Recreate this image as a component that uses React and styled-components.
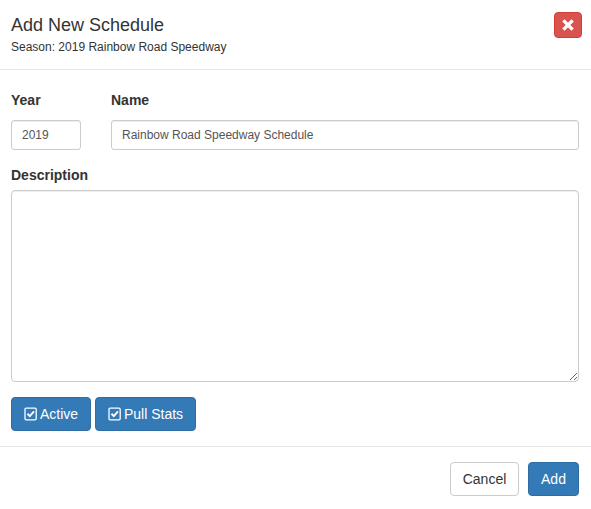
import React from 'react'
import styled, { createGlobalStyle } from 'styled-components'

const GlobalStyle = createGlobalStyle`
  * { box-sizing: border-box; }
  html, body { margin: 0; padding: 0; background: #fff; }
  body {
    font-family: "Liberation Sans", Arial, sans-serif;
    font-size: 14px;
    line-height: 1.42857;
    color: #333;
  }
`

const Modal = styled.div`
  width: 591px;
  height: 509px;
  background: #fff;
`

const Header = styled.header`
  display: flex;
  justify-content: space-between;
  align-items: flex-start;
  height: 70px;
  padding: 12px 9px 0 11px;
  border-bottom: 1px solid #e5e5e5;
`

const Title = styled.h4`
  margin: 0;
  font-size: 18px;
  font-weight: 500;
  line-height: 26px;
  color: #333;
`

const Subtitle = styled.div`
  font-size: 12px;
  line-height: 17px;
  margin-top: 1px;
`

const CloseButton = styled.button`
  display: flex;
  align-items: center;
  justify-content: center;
  width: 28px;
  height: 26px;
  padding: 0;
  background: #d9534f;
  border: 1px solid #d43f3a;
  border-radius: 4px;
  color: #fff;
`

const Body = styled.div`
  padding: 20px 12px 0 11px;
`

const Row = styled.div`
  display: flex;
  gap: 30px;
`

const Field = styled.div`
  display: flex;
  flex-direction: column;
  width: ${p => p.$width || 'auto'};
  flex: ${p => (p.$grow ? 1 : 'none')};
`

const Label = styled.label`
  display: block;
  font-weight: 700;
  line-height: 20px;
  margin-bottom: 10px;
`

const Input = styled.input`
  display: block;
  width: 100%;
  height: 30px;
  padding: 5px 10px;
  font: inherit;
  font-size: 12px;
  line-height: 18px;
  color: #555;
  background: #fff;
  border: 1px solid #ccc;
  border-radius: 3px;
  box-shadow: inset 0 1px 1px rgba(0, 0, 0, 0.075);
`

const DescriptionField = styled.div`
  margin-top: 15px;
`

const DescriptionLabel = styled(Label)`
  margin-bottom: 5px;
`

const TextArea = styled.textarea`
  display: block;
  width: 100%;
  height: 192px;
  padding: 6px 12px;
  font: inherit;
  color: #555;
  background: #fff;
  border: 1px solid #ccc;
  border-radius: 4px;
  box-shadow: inset 0 1px 1px rgba(0, 0, 0, 0.075);
`

const Toggles = styled.div`
  display: flex;
  gap: 4px;
  margin-top: 15px;
`

const Btn = styled.button`
  display: inline-flex;
  align-items: center;
  justify-content: center;
  width: ${p => p.$width || 'auto'};
  height: 34px;
  padding: 0 6px;
  white-space: nowrap;
  font: inherit;
  font-size: 14px;
  line-height: 20px;
  border: 1px solid ${p => (p.$primary ? '#2e6da4' : '#ccc')};
  border-radius: 4px;
  background: ${p => (p.$primary ? '#337ab7' : '#fff')};
  color: ${p => (p.$primary ? '#fff' : '#333')};
`

const ToggleIcon = styled.svg`
  width: 14px;
  height: 14px;
  margin-right: 2px;
  flex: none;
`

const Footer = styled.footer`
  display: flex;
  justify-content: flex-end;
  gap: 9px;
  margin-top: 15px;
  padding: 15px 12px 0 0;
  border-top: 1px solid #e5e5e5;
`

const CheckSquare = () => (
  <ToggleIcon viewBox="0 0 14 14" fill="none" stroke="currentColor">
    <rect x="1" y="1.2" width="11.2" height="11.6" rx="1.2" strokeWidth="1.3" />
    <path d="M3.5 6.8 5.8 9.1 10 4.4" strokeWidth="2" />
  </ToggleIcon>
)

const TimesIcon = () => (
  <svg width="12" height="12" viewBox="0 0 12 12" fill="none" stroke="currentColor">
    <path d="M2.6 2.6 9.4 9.4M9.4 2.6 2.6 9.4" strokeWidth="3.4" strokeLinecap="square" />
  </svg>
)

const App = () => (
  <>
    <GlobalStyle />
    <Modal>
      <Header>
        <div>
          <Title>Add New Schedule</Title>
          <Subtitle>Season: 2019 Rainbow Road Speedway</Subtitle>
        </div>
        <CloseButton><TimesIcon /></CloseButton>
      </Header>
      <Body>
        <Row>
          <Field $width="70px">
            <Label>Year</Label>
            <Input defaultValue="2019" />
          </Field>
          <Field $grow>
            <Label>Name</Label>
            <Input defaultValue="Rainbow Road Speedway Schedule" />
          </Field>
        </Row>
        <DescriptionField>
          <DescriptionLabel>Description</DescriptionLabel>
          <TextArea />
        </DescriptionField>
        <Toggles>
          <Btn $primary $width="80px"><CheckSquare />Active</Btn>
          <Btn $primary $width="101px"><CheckSquare />Pull Stats</Btn>
        </Toggles>
      </Body>
      <Footer>
        <Btn $width="69px">Cancel</Btn>
        <Btn $primary $width="51px">Add</Btn>
      </Footer>
    </Modal>
  </>
)

export default App
